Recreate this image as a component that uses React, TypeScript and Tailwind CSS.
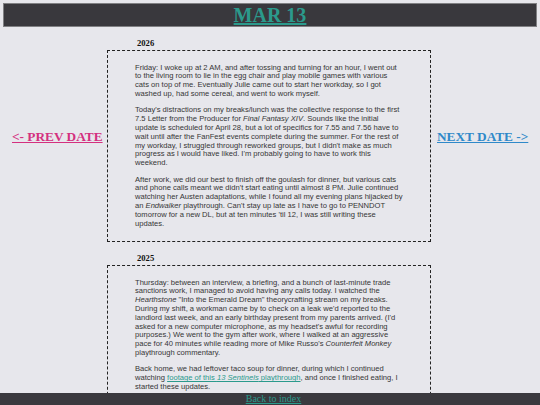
import type {ReactNode} from 'react';

const serif = "font-['Liberation_Serif',serif]";
const sans = "font-['Liberation_Sans',Arial,sans-serif]";

type Entry = {
  year: string;
  paragraphs: ReactNode[];
};

const entries: Entry[] = [
  {
    year: '2026',
    paragraphs: [
      <>
        Friday: I woke up at 2 AM, and after tossing and turning for an hour, I
        went out to the living room to lie in the egg chair and play mobile
        games with various cats on top of me. Eventually Julie came out to
        start her workday, so I got washed up, had some cereal, and went to
        work myself.
      </>,
      <>
        Today's distractions on my breaks/lunch was the collective response to
        the first 7.5 Letter from the Producer for <i>Final Fantasy XIV</i>.
        Sounds like the initial update is scheduled for April 28, but a lot of
        specifics for 7.55 and 7.56 have to wait until after the FanFest events
        complete during the summer. For the rest of my workday, I struggled
        through reworked groups, but I didn't make as much progress as I would
        have liked. I'm probably going to have to work this weekend.
      </>,
      <>
        After work, we did our best to finish off the goulash for dinner, but
        various cats and phone calls meant we didn't start eating until almost
        8 PM. Julie continued watching her Austen adaptations, while I found all
        my evening plans hijacked by an <i>Endwalker</i> playthrough. Can't
        stay up late as I have to go to PENNDOT tomorrow for a new DL, but at
        ten minutes 'til 12, I was still writing these updates.
      </>,
    ],
  },
  {
    year: '2025',
    paragraphs: [
      <>
        Thursday: between an interview, a briefing, and a bunch of last-minute
        trade sanctions work, I managed to avoid having any calls today. I
        watched the <i>Hearthstone</i> "Into the Emerald Dream" theorycrafting
        stream on my breaks. During my shift, a workman came by to check on a
        leak we'd reported to the landlord last week, and an early birthday
        present from my parents arrived. (I'd asked for a new computer
        microphone, as my headset's awful for recording purposes.) We went to
        the gym after work, where I walked at an aggressive pace for 40 minutes
        while reading more of Mike Russo's <i>Counterfeit Monkey</i>{' '}
        playthrough commentary.
      </>,
      <>
        Back home, we had leftover taco soup for dinner, during which I
        continued watching{' '}
        <a href="#" className="text-[#2b9a8c] underline">
          footage of this <i>13 Sentinels</i> playthrough
        </a>
        , and once I finished eating, I started these updates.
      </>,
    ],
  },
];

function DayEntry({year, paragraphs}: Entry) {
  return (
    <section className="mt-[11px]">
      <h2 className={`${serif} font-bold text-[8.6px] leading-[10px] pl-[30px] mb-[2px] text-[#111]`}>
        {year}
      </h2>
      <div className="border border-dashed border-[#222] px-[27px] py-[5px]">
        {paragraphs.map((p, i) => (
          <p
            key={i}
            className={`${sans} text-[7.6px] leading-[8.8px] text-[#363636] my-[7.6px]`}
          >
            {p}
          </p>
        ))}
      </div>
    </section>
  );
}

export default function App() {
  return (
    <div className="h-screen flex flex-col overflow-hidden bg-[#e7e7ec]">
      <header className="mx-[3px] mt-[3px] h-[24px] shrink-0 flex items-center justify-center bg-[#39383d] border border-[#808083]">
        <a
          href="#"
          className={`${serif} font-bold text-[20px] leading-none text-[#2b9a8c] underline`}
        >
          MAR 13
        </a>
      </header>

      <div className="flex flex-1 min-h-0 overflow-hidden">
        <div className="w-[107px] shrink-0 pl-[12px] pt-[96px]">
          <a
            href="#"
            className={`${serif} font-bold text-[13.3px] leading-[15px] text-[#d4307f] underline whitespace-nowrap`}
          >
            &lt;- PREV DATE
          </a>
        </div>

        <main className="w-[324px] shrink-0">
          {entries.map((e) => (
            <DayEntry key={e.year} {...e} />
          ))}
        </main>

        <div className="flex-1 pl-[6px] pt-[96px]">
          <a
            href="#"
            className={`${serif} font-bold text-[13.3px] leading-[15px] text-[#2f89c9] underline whitespace-nowrap`}
          >
            NEXT DATE -&gt;
          </a>
        </div>
      </div>

      <footer className="h-[12px] shrink-0 flex justify-center pl-[7px] bg-[#3a393e]">
        <a
          href="#"
          className={`${serif} text-[10px] leading-[12px] text-[#2b9a8c] underline`}
        >
          Back to index
        </a>
      </footer>
    </div>
  );
}
